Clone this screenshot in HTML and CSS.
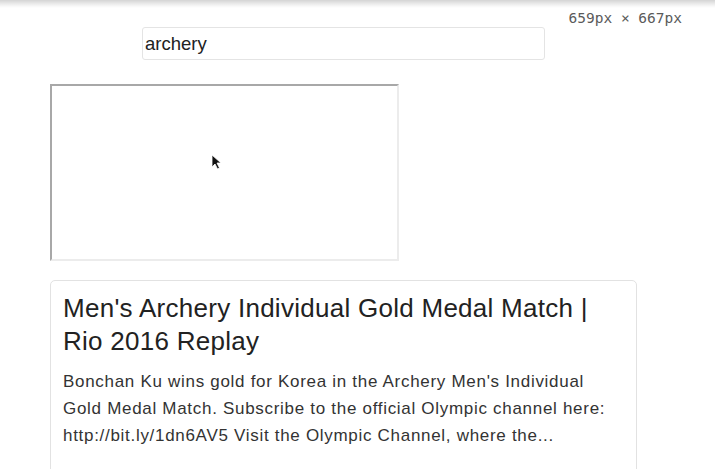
FILE: index.html
```html
<!DOCTYPE html>
<html>
<head>
<meta charset="utf-8">
<link rel="stylesheet" href="styles.css">
</head>
<body>
<div class="chrome"></div>
<div class="size-label">659px × 667px</div>
<div class="search-wrap">
  <input class="search" type="text" value="archery">
</div>
<div class="player">
  <svg class="cursor" width="11" height="16" viewBox="0 0 11 16"><path d="M1 1 L1 13 L4 10 L6.5 15 L8.5 14 L6 9 L10 9 Z" fill="#111" stroke="#fff" stroke-width="0.8"/></svg>
</div>
<div class="card">
  <h2 class="title">Men's Archery Individual Gold Medal Match | Rio 2016 Replay</h2>
  <p class="desc">Bonchan Ku wins gold for Korea in the Archery Men's Individual Gold Medal Match. Subscribe to the official Olympic channel here: http://bit.ly/1dn6AV5 Visit the Olympic Channel, where the...</p>
</div>
</body>
</html>
```
FILE: styles.css
```css
html, body {
  margin: 0;
  padding: 0;
  background: #fff;
  overflow: hidden;
}
body {
  font-family: "Liberation Sans", Arial, sans-serif;
  color: #222;
}
.chrome {
  height: 8px;
  background: linear-gradient(to bottom, #d4d4d4 0px, #e6e6e6 3px, #f7f7f7 6px, #fff 8px);
}
.size-label {
  position: absolute;
  top: 9px;
  right: 33px;
  font-family: "DejaVu Sans Mono", monospace;
  font-size: 14.5px;
  color: #5a5a5a;
  line-height: 18px;
}
.search-wrap {
  padding-left: 142px;
  margin-top: 19px;
}
.search {
  display: block;
  box-sizing: border-box;
  width: 403px;
  height: 33px;
  margin: 0;
  border: 1px solid #e4e4e4;
  border-radius: 3px;
  padding: 0 2px;
  font-family: "Liberation Sans", Arial, sans-serif;
  font-size: 18.5px;
  color: #222;
  outline: none;
}
.player {
  position: relative;
  box-sizing: border-box;
  width: 349px;
  height: 177px;
  margin: 24px 0 0 50px;
  border-style: solid;
  border-width: 2px;
  border-color: #a8a8a8 #ececec #ececec #a8a8a8;
  background: #fff;
}
.cursor {
  position: absolute;
  left: 159px;
  top: 68px;
}
.card {
  box-sizing: border-box;
  width: 587px;
  margin: 19px 0 0 50px;
  border: 1px solid #e2e2e2;
  border-radius: 5px;
  padding: 11px 12px 40px 12px;
}
.title {
  margin: 0;
  font-size: 26px;
  letter-spacing: 0.27px;
  line-height: 33px;
  font-weight: normal;
  color: #222;
}
.desc {
  margin: 10px 0 0 0;
  font-size: 17px;
  letter-spacing: 0.7px;
  line-height: 27px;
  color: #333;
}
```
